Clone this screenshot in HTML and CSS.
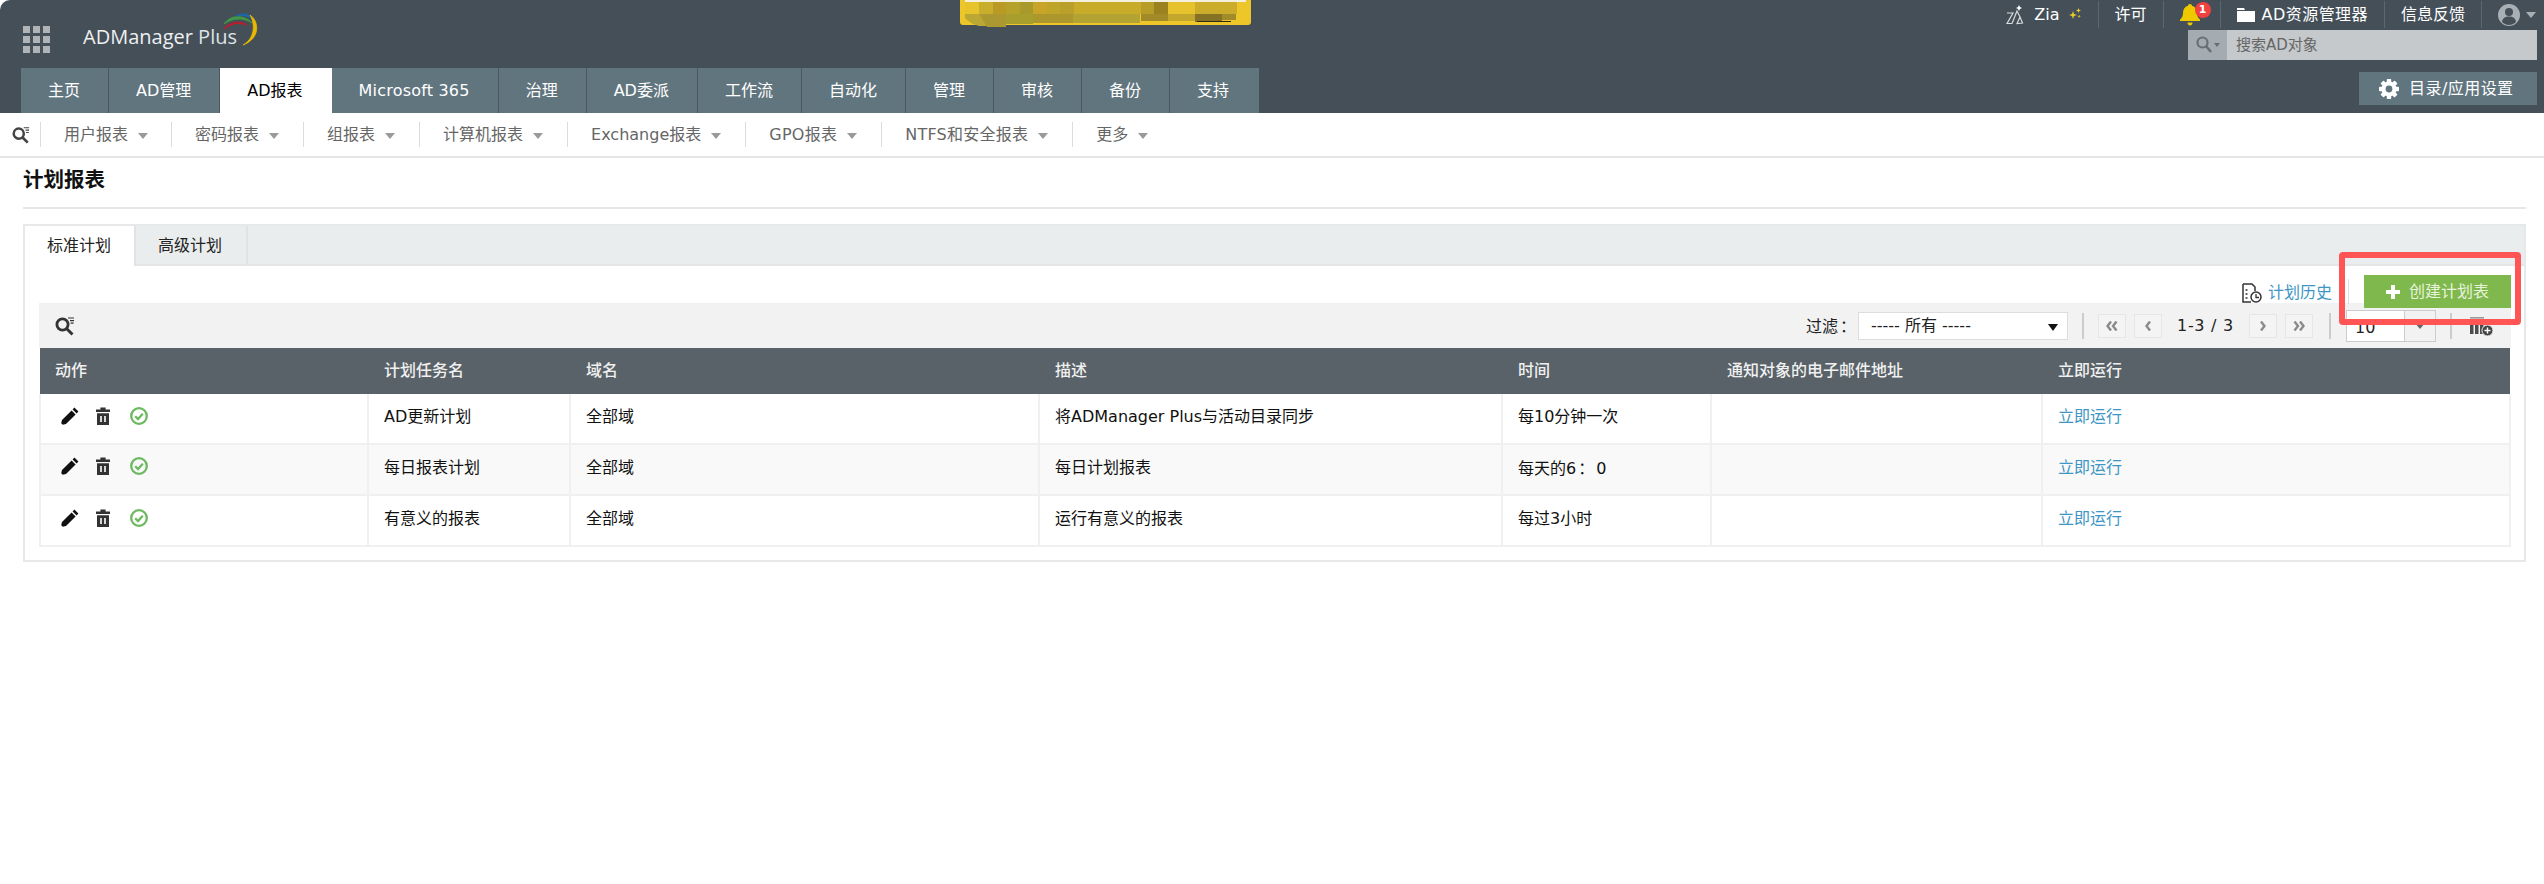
FILE: index.html
```html
<!DOCTYPE html>
<html lang="zh">
<head>
<meta charset="utf-8">
<title>ADManager Plus - 计划报表</title>
<link rel="stylesheet" href="styles.css">
</head>
<body>
<svg class="defs" width="0" height="0" aria-hidden="true">
  <symbol id="i-search" viewBox="0 0 20 20"><circle cx="7.5" cy="8.5" r="5.6" fill="none" stroke="currentColor" stroke-width="2.8"/><path d="M11.5 12.5l6 6" stroke="currentColor" stroke-width="3" fill="none"/><path d="M13 2h6M15 4.6h4M15.6 7.2h3" stroke="currentColor" stroke-width="1.2" fill="none"/></symbol>
  <symbol id="i-pencil" viewBox="0 0 18 18"><path d="M13.4 0.6l4 4-1.8 1.8-4-4zM10.6 3.4l4 4-9.6 9.6-3.2 .8-1.6-1.6 .8-3.2z" fill="currentColor"/></symbol>
  <symbol id="i-trash" viewBox="0 0 14 18"><path d="M0 2.6h14V5H0zM4.4 .4h5.2v2H4.4zM1 6.2h12V18H1z" fill="currentColor"/><path d="M5 9v6M9 9v6" stroke="#fff" stroke-width="1.6"/></symbol>
  <symbol id="i-check" viewBox="0 0 18 18"><circle cx="9" cy="9" r="7.8" fill="none" stroke="currentColor" stroke-width="2.3"/><path d="M5.2 9.200l2.800 2.800 4.800-5.200" fill="none" stroke="currentColor" stroke-width="2.3"/></symbol>
</svg>

<header class="topbar">
  <div class="topbar-left">
    <div class="brand">
      <svg class="apps" width="27" height="27" viewBox="0 0 27 27" aria-hidden="true"><path d="M0 0h7v7H0zM10 0h7v7h-7zM20 0h7v7h-7zM0 10h7v7H0zM10 10h7v7h-7zM20 10h7v7h-7zM0 20h7v7H0zM10 20h7v7h-7zM20 20h7v7h-7z" fill="#b0b4b7"/></svg>
      <span class="logo-text">ADManager <span class="logo-light">Plus</span></span>
      <svg class="logo-arcs" width="36" height="33" viewBox="0 0 36 33" aria-hidden="true">
        <path d="M1 16C6 9 17 7 24 12C17 9 8 10 1 16Z" fill="#b3202f" stroke="#b3202f" stroke-width="1.2"/>
        <path d="M1 11C7 2 21 1 29 10C21 4 9 5 1 11Z" fill="#3f9a45" stroke="#3f9a45"/>
        <path d="M13 3C20 -1 28 1 32 8C27 3 20 1.600 13 3Z" fill="#1c68a8" stroke="#1c68a8"/>
        <path d="M27 2C36 8 38 25 20 32C31 26 33 12 27 2Z" fill="#e9b800" stroke="#e9b800" stroke-width=".8"/>
      </svg>
    </div>
    <nav class="tabs">
      <a class="tab">主页</a><a class="tab">AD管理</a><a class="tab is-active">AD报表</a><a class="tab tab-wide">Microsoft 365</a><a class="tab">治理</a><a class="tab">AD委派</a><a class="tab">工作流</a><a class="tab">自动化</a><a class="tab">管理</a><a class="tab">审核</a><a class="tab">备份</a><a class="tab">支持</a>
    </nav>
  </div>

  <div class="topbar-right">
    <div class="links">
      <span class="link link-zia">
        <svg class="zia-icon" width="20" height="20" viewBox="0 0 20 20" aria-hidden="true"><path d="M1 8h6L1 18.500h5M6 18.500L11 6l3 6-3 6.500 5.500-.5-2.500-6" fill="none" stroke="#d8dcde" stroke-width="1.200"/><path d="M13 0l1 2 2 1-2 1-1 2-1-2-2-1 2-1z" fill="#fff"/></svg>
        <span>Zia</span>
        <svg class="spark" width="14" height="14" viewBox="0 0 14 14" aria-hidden="true"><path d="M5 3l1 3 3 1-3 1-1 3-1-3-3-1 3-1zM10.500 0l.7 1.800 1.800.7-1.800.7-.7 1.800-.7-1.800L8 2.500l1.800-.7zM11 6.500l.5 1.300 1.300.5-1.300.5-.5 1.300-.5-1.300L9.200 8.800l1.300-.5z" fill="#eccb2a"/></svg>
      </span>
      <span class="link">许可</span>
      <span class="link link-bell">
        <svg width="20" height="22" viewBox="0 0 20 22" aria-hidden="true"><path d="M10 0c1.200 0 2 .8 2 1.800 3.500 1 5 3.800 5 7 0 3.500 1 5 3 6.700v1.500H0v-1.500c2-1.700 3-3.200 3-6.700 0-3.200 1.500-6 5-7C8 .8 8.800 0 10 0zM7.500 18.500h5c0 1.700-1 3-2.500 3s-2.500-1.300-2.500-3z" fill="#eec900"/></svg>
        <b class="badge">1</b>
      </span>
      <span class="link link-folder">
        <svg width="18" height="14" viewBox="0 0 18 14" aria-hidden="true"><path d="M0 0h7l1 2H0zM0 3h18v11H0z" fill="#fff"/></svg>
        <span class="folder-label">AD资源管理器</span>
      </span>
      <span class="link">信息反馈</span>
      <span class="link link-user">
        <svg width="22" height="22" viewBox="0 0 22 22" aria-hidden="true"><circle cx="11" cy="11" r="11" fill="#a9b0b5"/><circle cx="11" cy="8" r="4" fill="#444f58"/><path d="M4 18c.6-4 3-5.500 7-5.500s6.400 1.500 7 5.500c-2 2-4.500 3-7 3s-5-1-7-3z" fill="#444f58"/></svg>
        <i class="caret caret-light"></i>
      </span>
    </div>
    <div class="search">
      <span class="search-type">
        <svg width="16" height="18" viewBox="0 0 16 18" aria-hidden="true"><circle cx="6.500" cy="6.500" r="5" fill="none" stroke="#676f74" stroke-width="2.200"/><path d="M10 10l5 6" stroke="#676f74" stroke-width="2.600"/></svg>
        <i class="caret caret-small"></i>
      </span>
      <span class="search-input">搜索AD对象</span>
    </div>
    <a class="settings">
      <svg width="20" height="20" viewBox="0 0 20 20" aria-hidden="true"><g fill="#fff"><circle cx="10" cy="10" r="7.600"/><rect x="7.800" y="0" width="4.400" height="20" rx=".8"/><rect x="7.800" y="0" width="4.400" height="20" rx=".8" transform="rotate(45 10 10)"/><rect x="7.800" y="0" width="4.400" height="20" rx=".8" transform="rotate(90 10 10)"/><rect x="7.800" y="0" width="4.400" height="20" rx=".8" transform="rotate(135 10 10)"/></g><circle cx="10" cy="10" r="3.400" fill="#61757f"/></svg>
      <span class="settings-label">目录/应用设置</span>
    </a>
  </div>
  <svg class="masked" width="293" height="27" viewBox="0 0 293 27" aria-hidden="true">
    <path d="M1 0h291v22q0 3-3 3H4q-3 0-3-3z" fill="#edc62a"/>
    <rect x="6" y="0" width="281" height="2" fill="#f4f0e0"/>
    <path d="M6 2h14v12H6z" fill="#e8c42c"/><path d="M20 2h14v12H20z" fill="#c9ae2c"/><path d="M34 2h13v12H34z" fill="#b89a25"/><path d="M47 2h14v12H47z" fill="#b5a22a"/><path d="M61 2h13v12H61z" fill="#a89a2a"/><path d="M74 2h14v12H74z" fill="#c8a428"/><path d="M88 2h13v12H88z" fill="#bfa42a"/><path d="M101 2h14v12h-14z" fill="#b8a02a"/><path d="M115 2h67v12h-67z" fill="#c9ab2a"/><path d="M182 2h13v12h-13z" fill="#b89c28"/><path d="M195 2h14v12h-14z" fill="#9c8120"/><path d="M209 2h27v12h-27z" fill="#e6c22c"/><path d="M236 2h42v12h-42z" fill="#cbad2b"/>
    <path d="M6 14h14l8 12H20q-10-3-14-8z" fill="#bba733"/><path d="M20 14h27v13H28z" fill="#ab9830"/><path d="M47 14h27v10H47z" fill="#a89e2e"/><path d="M74 14h40v9H74z" fill="#ac972d"/><path d="M114 14h67v9h-67z" fill="#b3a332"/><path d="M182 14h27v7h-27z" fill="#a38a28"/><path d="M209 14h27v7h-27z" fill="#c3a62c"/><path d="M236 14h27v8h-27z" fill="#857224"/><path d="M263 14h14v6h-14z" fill="#a08c28"/><path d="M238 21h34v1h-34z" fill="#2e2a14"/>
  </svg>
</header>

<nav class="subnav">
  <svg class="subnav-search" width="18" height="18" aria-hidden="true"><use href="#i-search"/></svg>
  <a class="subitem">用户报表<i class="caret"></i></a>
  <a class="subitem">密码报表<i class="caret"></i></a>
  <a class="subitem">组报表<i class="caret"></i></a>
  <a class="subitem">计算机报表<i class="caret"></i></a>
  <a class="subitem">Exchange报表<i class="caret"></i></a>
  <a class="subitem subitem-wide">GPO报表<i class="caret"></i></a>
  <a class="subitem subitem-wide">NTFS和安全报表<i class="caret"></i></a>
  <a class="subitem">更多<i class="caret"></i></a>
</nav>

<main class="page">
  <h1 class="title">计划报表</h1>
  <section class="panel">
    <div class="panel-tabs">
      <a class="ptab is-active">标准计划</a>
      <a class="ptab">高级计划</a>
    </div>
    <div class="panel-body">
      <div class="actions">
        <a class="history">
          <svg width="20" height="20" viewBox="0 0 20 20" aria-hidden="true"><path d="M1 1h9l3 3v4M1 1v18h8" fill="none" stroke="#333" stroke-width="1.500"/><path d="M3.500 7h2M3.500 11h2M3.500 15h2" stroke="#333" stroke-width="1.500"/><circle cx="14" cy="14" r="5" fill="#fff" stroke="#333" stroke-width="1.500"/><path d="M14 11v3.500h3" fill="none" stroke="#333" stroke-width="1.300"/></svg>
          <span>计划历史</span>
        </a>
        <i class="action-sep"></i>
        <a class="create">
          <svg width="14" height="14" viewBox="0 0 14 14" aria-hidden="true"><path d="M5 0h4v5h5v4H9v5H5V9H0V5h5z" fill="#fff"/></svg>
          <span>创建计划表</span>
        </a>
      </div>
      <div class="toolbar">
        <svg class="tool-search" width="20" height="20" aria-hidden="true"><use href="#i-search"/></svg>
        <div class="tool-right">
          <span class="filter-label">过滤<span class="colon">：</span></span>
          <span class="filter-select">----- 所有 -----<i class="caret caret-dark"></i></span>
          <i class="tool-sep"></i>
          <a class="pager pager-first"><svg width="12" height="10" viewBox="0 0 12 10" aria-hidden="true"><path d="M5 .5L1.500 5 5 9.500M10.500 .5L7 5l3.500 4.500" fill="none" stroke="#8a8a8a" stroke-width="2.400"/></svg></a>
          <a class="pager"><svg width="6" height="10" viewBox="0 0 6 10" aria-hidden="true"><path d="M5 .5L1.500 5 5 9.500" fill="none" stroke="#8a8a8a" stroke-width="2.400"/></svg></a>
          <span class="page-count">1-3 / 3</span>
          <a class="pager"><svg width="6" height="10" viewBox="0 0 6 10" aria-hidden="true"><path d="M1 .5L4.500 5 1 9.500" fill="none" stroke="#8a8a8a" stroke-width="2.400"/></svg></a>
          <a class="pager pager-last"><svg width="12" height="10" viewBox="0 0 12 10" aria-hidden="true"><path d="M1.500 .5L5 5 1.500 9.500M7 .5L10.500 5 7 9.500" fill="none" stroke="#8a8a8a" stroke-width="2.400"/></svg></a>
          <i class="tool-sep tool-sep-b"></i>
          <span class="size-select"><span class="size-value">10</span><span class="size-arrow"><i class="caret caret-grey"></i></span></span>
          <i class="tool-sep tool-sep-c"></i>
          <svg class="columns" width="24" height="20" viewBox="0 0 24 20" aria-hidden="true"><path d="M0 1h14v1.600H0z" fill="#999"/><path d="M0 5h3.500v13H0zM5 5h3.500v13H5zM10 5h3.500v13H10z" fill="#4d4d4d"/><circle cx="17.500" cy="14.500" r="5.500" fill="#444" stroke="#f2f2f2"/><path d="M14.500 14.500h6M17.500 11.500v6" stroke="#fff" stroke-width="1.400"/></svg>
        </div>
      </div>
      <table class="grid">
        <colgroup>
          <col class="c-act"><col class="c-name"><col class="c-domain"><col class="c-desc"><col class="c-time"><col class="c-mail"><col class="c-run">
        </colgroup>
        <thead>
          <tr><th>动作</th><th>计划任务名</th><th>域名</th><th>描述</th><th>时间</th><th>通知对象的电子邮件地址</th><th>立即运行</th></tr>
        </thead>
        <tbody>
          <tr>
            <td><span class="row-icons"><svg class="ic-pencil" width="18" height="18"><use href="#i-pencil"/></svg><svg class="ic-trash" width="14" height="18"><use href="#i-trash"/></svg><svg class="ic-check" width="18" height="18"><use href="#i-check"/></svg></span></td>
            <td>AD更新计划</td><td>全部域</td><td>将ADManager Plus与活动目录同步</td><td>每10分钟一次</td><td></td><td><a class="run">立即运行</a></td>
          </tr>
          <tr>
            <td><span class="row-icons"><svg class="ic-pencil" width="18" height="18"><use href="#i-pencil"/></svg><svg class="ic-trash" width="14" height="18"><use href="#i-trash"/></svg><svg class="ic-check" width="18" height="18"><use href="#i-check"/></svg></span></td>
            <td>每日报表计划</td><td>全部域</td><td>每日计划报表</td><td>每天的6<span class="colon">：</span>0</td><td></td><td><a class="run">立即运行</a></td>
          </tr>
          <tr>
            <td><span class="row-icons"><svg class="ic-pencil" width="18" height="18"><use href="#i-pencil"/></svg><svg class="ic-trash" width="14" height="18"><use href="#i-trash"/></svg><svg class="ic-check" width="18" height="18"><use href="#i-check"/></svg></span></td>
            <td>有意义的报表</td><td>全部域</td><td>运行有意义的报表</td><td>每过3小时</td><td></td><td><a class="run">立即运行</a></td>
          </tr>
        </tbody>
      </table>
    </div>
  </section>
  <div class="callout" aria-hidden="true"></div>
</main>
</body>
</html>
```

FILE: styles.css
```css
* { box-sizing: border-box; }
html, body { margin: 0; padding: 0; background: #fff; }
body {
  position: relative;
  font: 16px/22px "DejaVu Sans", "Noto Sans CJK SC", sans-serif;
  color: #111;
  overflow: hidden;
}
a { text-decoration: none; color: inherit; }
i { font-style: normal; }
.defs { position: absolute; }
.colon { font-family: "Noto Sans CJK TC", sans-serif; margin: 0 2px; }

.topbar {
  position: relative;
  height: 113px;
  background: #444f58;
  border-top-left-radius: 10px;
  display: flex;
  justify-content: space-between;
}
.topbar-left { display: flex; flex-direction: column; }
.brand { height: 68px; position: relative; display: flex; align-items: flex-start; padding-left: 23px; }
.apps { margin-top: 26px; }
.logo-text {
  margin: 25px 0 0 33px;
  font: 500 20px/24px "Open Sans", sans-serif;
  color: #eef0f1;
}
.logo-light { font-weight: 400; color: #dfe3e5; }
.logo-arcs { margin: 13px 0 0 -14px; }

.tabs { display: flex; height: 45px; margin-left: 21px; }
.tab {
  padding: 0 28px 0 27px;
  border-right: 1px solid #4b5861;
  background: #61757f;
  color: #fff;
  line-height: 45px;
  white-space: nowrap;
}
.tab.is-active { background: #fff; color: #000; border-right-color: #fff; }
.tab:last-child { border-right: 0; padding-right: 30px; }
.tab-wide { letter-spacing: .2px; }

.topbar-right { display: flex; flex-direction: column; align-items: flex-end; padding-right: 7px; }
.links { display: flex; height: 30px; padding-top: 1px; margin-right: 1px; }
.link {
  display: flex;
  align-items: center;
  gap: 7px;
  height: 27px;
  padding: 0 16px;
  color: #fff;
  border-right: 1px solid #5b6770;
  white-space: nowrap;
}
.link-zia { gap: 8px; padding: 0 16px 0 0; }
.link-bell { position: relative; padding: 0 20px 0 16px; }
.badge {
  position: absolute;
  right: 9px; top: 1px;
  width: 16px; height: 16px;
  border-radius: 50%;
  background: #f04040;
  color: #fff;
  font: 700 11px/16px "DejaVu Sans", sans-serif;
  text-align: center;
}
.folder-label { letter-spacing: .45px; }
.link-user { border-right: 0; padding: 0 0 0 16px; gap: 6px; }
.caret {
  display: inline-block;
  width: 0; height: 0;
  margin-left: 10px;
  border: 5.500px solid transparent;
  border-top: 6px solid #9a9a9a;
  border-bottom: 0;
  vertical-align: middle;
}
.caret-light { margin-left: 0; border-top-color: #a9b0b5; }
.caret-small { margin-left: 2px; border-width: 4px 3.500px 0; border-top-color: #676f74; }
.caret-dark { position: absolute; right: 9px; top: 11px; border-top: 7px solid #111; }
.caret-grey { margin: 0; border-top-color: #666; }

.search { width: 349px; height: 30px; display: flex; background: #c5c9cc; }
.search-type {
  width: 39px;
  background: #a4acb1;
  display: flex;
  align-items: center;
  justify-content: center;
}
.search-input { padding-left: 9px; font-size: 15px; line-height: 30px; color: #666; }
.settings {
  margin-top: 12px;
  width: 178px;
  height: 33px;
  background: #61757f;
  color: #fff;
  display: flex;
  align-items: center;
  gap: 10px;
  padding-left: 20px;
  white-space: nowrap;
}
.settings-label { letter-spacing: .45px; }
.masked { position: absolute; left: 959px; top: 0; }

.subnav {
  height: 45px;
  display: flex;
  align-items: center;
  border-bottom: 2px solid #e6e6e6;
  padding: 0 0 0 12px;
  color: #666;
}
.subnav-search { color: #444; margin-right: 10px; }
.subitem {
  height: 25px;
  line-height: 25px;
  padding: 0 24px 0 23px;
  border-left: 1px solid #dcdcdc;
  white-space: nowrap;
}
.subnav-search + .subitem { padding-right: 23px; }
.subitem-wide { letter-spacing: .25px; }

.page { position: relative; padding: 0 18px 0 23px; }
.title {
  margin: 0;
  height: 51px;
  padding-top: 10px;
  border-bottom: 2px solid #e6e6e6;
  font: 700 20.500px/24px "DejaVu Sans", "Noto Sans CJK SC", sans-serif;
  color: #111;
}
.panel { margin-top: 15px; height: 338px; border: 2px solid #e6e8e9; }
.panel-tabs { height: 40px; display: flex; background: #eaedee; border-bottom: 2px solid #e3e5e6; }
.ptab {
  width: 112px;
  padding-left: 22px;
  line-height: 39px;
  border-right: 2px solid #e0e3e4;
  color: #222;
}
.ptab.is-active { width: 111px; background: #fff; height: 40px; }

.panel-body { padding: 0 13px 0 14px; }
.actions { height: 37px; display: flex; justify-content: flex-end; align-items: flex-start; }
.history {
  display: flex;
  align-items: center;
  gap: 6px;
  margin-top: 17px;
  height: 20px;
  color: #3d96c4;
}
.action-sep { width: 1px; height: 25px; margin: 13px 15px 0 16px; background: #ddd; }
.create {
  position: relative;
  width: 147px;
  height: 33px;
  margin-top: 9px;
  background: #7fb84c;
  color: #e8f3dc;
  display: flex;
  align-items: center;
  gap: 9px;
  padding-left: 22px;
  white-space: nowrap;
}

.toolbar { height: 45px; background: #f2f2f2; display: flex; justify-content: space-between; align-items: center; padding: 0 17px 0 16px; }
.tool-search { color: #333; }
.tool-right { display: flex; align-items: center; }
.filter-label { color: #222; white-space: nowrap; width: 46px; }
.filter-select {
  position: relative;
  width: 210px;
  height: 28px;
  margin-left: 6px;
  padding-left: 12px;
  background: #fff;
  border: 1px solid #ddd;
  line-height: 26px;
  color: #222;
  white-space: nowrap;
}
.tool-sep { width: 2px; height: 26px; margin: 0 14px; background: #ccc; }
.tool-sep-b { margin: 0 15px 0 16px; }
.tool-sep-c { margin: 0 18px 0 14px; }
.pager {
  width: 28px;
  height: 24px;
  margin-right: 8px;
  background: #f4f4f4;
  border: 1px solid #e6e6e6;
  display: flex;
  align-items: center;
  justify-content: center;
}
.pager-last { margin-right: 0; }
.page-count { width: 57px; margin: 0 15px 0 7px; white-space: nowrap; color: #222; letter-spacing: .7px; }
.size-select {
  width: 90px;
  height: 32px;
  display: flex;
  background: #fff;
  border: 1px solid #ccc;
  color: #222;
}
.size-value { width: 57px; padding-left: 8px; line-height: 34px; }
.size-arrow { flex: 1; background: #f2f2f2; border-left: 1px solid #ccc; display: flex; align-items: center; justify-content: center; }
.columns { display: block; }

.grid { width: 2472px; border-collapse: collapse; table-layout: fixed; }
.c-act { width: 328px; }
.c-name { width: 202px; }
.c-domain { width: 469px; }
.c-desc { width: 463px; }
.c-time { width: 209px; }
.c-mail { width: 331px; }
.grid th {
  height: 46px;
  padding: 0 0 0 16px;
  background: #586268;
  color: #f0f0f0;
  font-weight: 500;
  text-align: left;
}
.grid th:first-child { padding-left: 15px; }
.grid td {
  height: 50px;
  padding: 0 0 3px 15px;
  border: 2px solid #f0f0f0;
  border-width: 0 0 2px 2px;
  color: #111;
  white-space: nowrap;
}
.grid td:last-child { border-right-width: 2px; }
.grid tbody tr:nth-child(2) td { background: #f9f9f9; height: 51px; padding-bottom: 4px; }
.grid tbody tr:nth-child(3) td { height: 51px; }
.row-icons { display: flex; align-items: center; gap: 17px; padding: 0 0 3px 5px; }
.ic-pencil { color: #111; }
.ic-trash { color: #333; }
.ic-check { color: #6cb95f; margin-left: 3px; }
.run { color: #3d96c4; }

.callout {
  position: absolute;
  left: 2339px;
  top: 94px;
  width: 182px;
  height: 73px;
  border: 6px solid #ff5555;
  border-radius: 4px;
}
```
